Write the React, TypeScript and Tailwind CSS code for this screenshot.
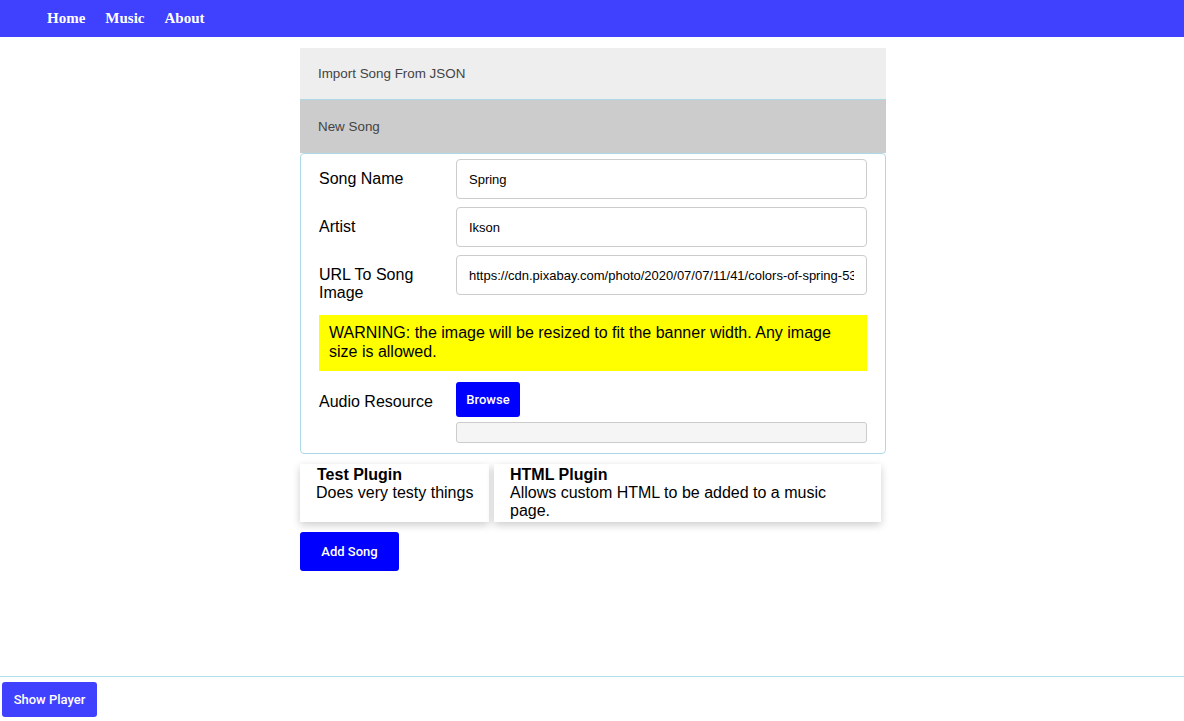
import React from "react";

const sans = "font-['Liberation_Sans',Arial,sans-serif]";
const btn = "font-['Roboto',sans-serif] font-medium text-white text-[13px] rounded-[3px]";

function Row({ label, children }: { label: React.ReactNode; children: React.ReactNode }) {
  return (
    <div className="flex">
      <div className="w-[137px] shrink-0 pt-[11px] pr-3 text-[16px] leading-[18px] text-black">{label}</div>
      <div className="flex-1">{children}</div>
    </div>
  );
}

function TextInput({ value }: { value: string }) {
  return (
    <input
      readOnly
      value={value}
      className={`w-full h-[40px] px-3 border border-[#ccc] rounded-[4px] text-[13px] text-black bg-white outline-none ${sans}`}
    />
  );
}

export default function App() {
  return (
    <div className={`min-h-screen flex flex-col bg-white ${sans}`}>
      {/* Nav */}
      <nav className="h-[37px] bg-[#4040ff] flex items-center gap-5 pl-[47px] font-['Liberation_Serif',serif] font-bold text-[15px] text-white">
        <a>Home</a>
        <a>Music</a>
        <a>About</a>
      </nav>

      <main className="w-[586px] ml-[300px] mt-[11px]">
        <div className="h-[52px] px-[18px] pt-[2px] flex items-center bg-[#eeeeee] border-b border-[#add8e6] text-[13.4px] text-[#444]">
          Import Song From JSON
        </div>
        <div className="h-[53px] px-[18px] pt-[2px] flex items-center bg-[#cccccc] text-[13.4px] text-[#444]">New Song</div>

        <div className="border border-[#add8e6] rounded-[4px] px-[18px] pt-[5px] pb-[10px]">
          <div className="flex flex-col gap-2">
            <Row label="Song Name">
              <TextInput value="Spring" />
            </Row>
            <Row label="Artist">
              <TextInput value="Ikson" />
            </Row>
            <Row label="URL To Song Image">
              <TextInput value="https://cdn.pixabay.com/photo/2020/07/07/11/41/colors-of-spring-5380267_1280.jpg" />
            </Row>
          </div>

          <div className="mt-[13px] bg-[#ffff00] px-[10px] pt-[8px] pb-[10px] text-[16px] leading-[19px] text-black">
            WARNING: the image will be resized to fit the banner width. Any image size is allowed.
          </div>

          <div className="mt-[11px]">
            <Row label="Audio Resource">
              <button className={`w-[64px] h-[35px] bg-[#0000ff] ${btn}`}>Browse</button>
              <div className="mt-[5px] h-[21px] bg-[#f5f5f5] border border-[#ccc] rounded-[3px]" />
            </Row>
          </div>
        </div>

        <div className="flex gap-[5px] mt-[10px]">
          <div className="w-[189px] shrink-0 h-[58px] px-[17px] pt-[2px] bg-white shadow-[0_3px_8px_rgba(0,0,0,0.2)] text-[16px] leading-[18px] text-black whitespace-nowrap">
            <div className="font-bold">Test Plugin</div>
            <div className="-ml-px">Does very testy things</div>
          </div>
          <div className="w-[387px] h-[58px] px-4 pt-[2px] bg-white shadow-[0_3px_8px_rgba(0,0,0,0.2)] text-[16px] leading-[18px] text-black">
            <div className="font-bold">HTML Plugin</div>
            <div>Allows custom HTML to be added to a music page.</div>
          </div>
        </div>

        <button className={`mt-[10px] w-[99px] h-[39px] bg-[#0000ff] ${btn}`}>Add Song</button>
      </main>

      <footer className="mt-auto border-t border-[#b0e0e6] pt-[5px] pb-[4px] pl-[2px]">
        <button className={`w-[95px] h-[35px] bg-[#4040ff] ${btn}`}>Show Player</button>
      </footer>
    </div>
  );
}
